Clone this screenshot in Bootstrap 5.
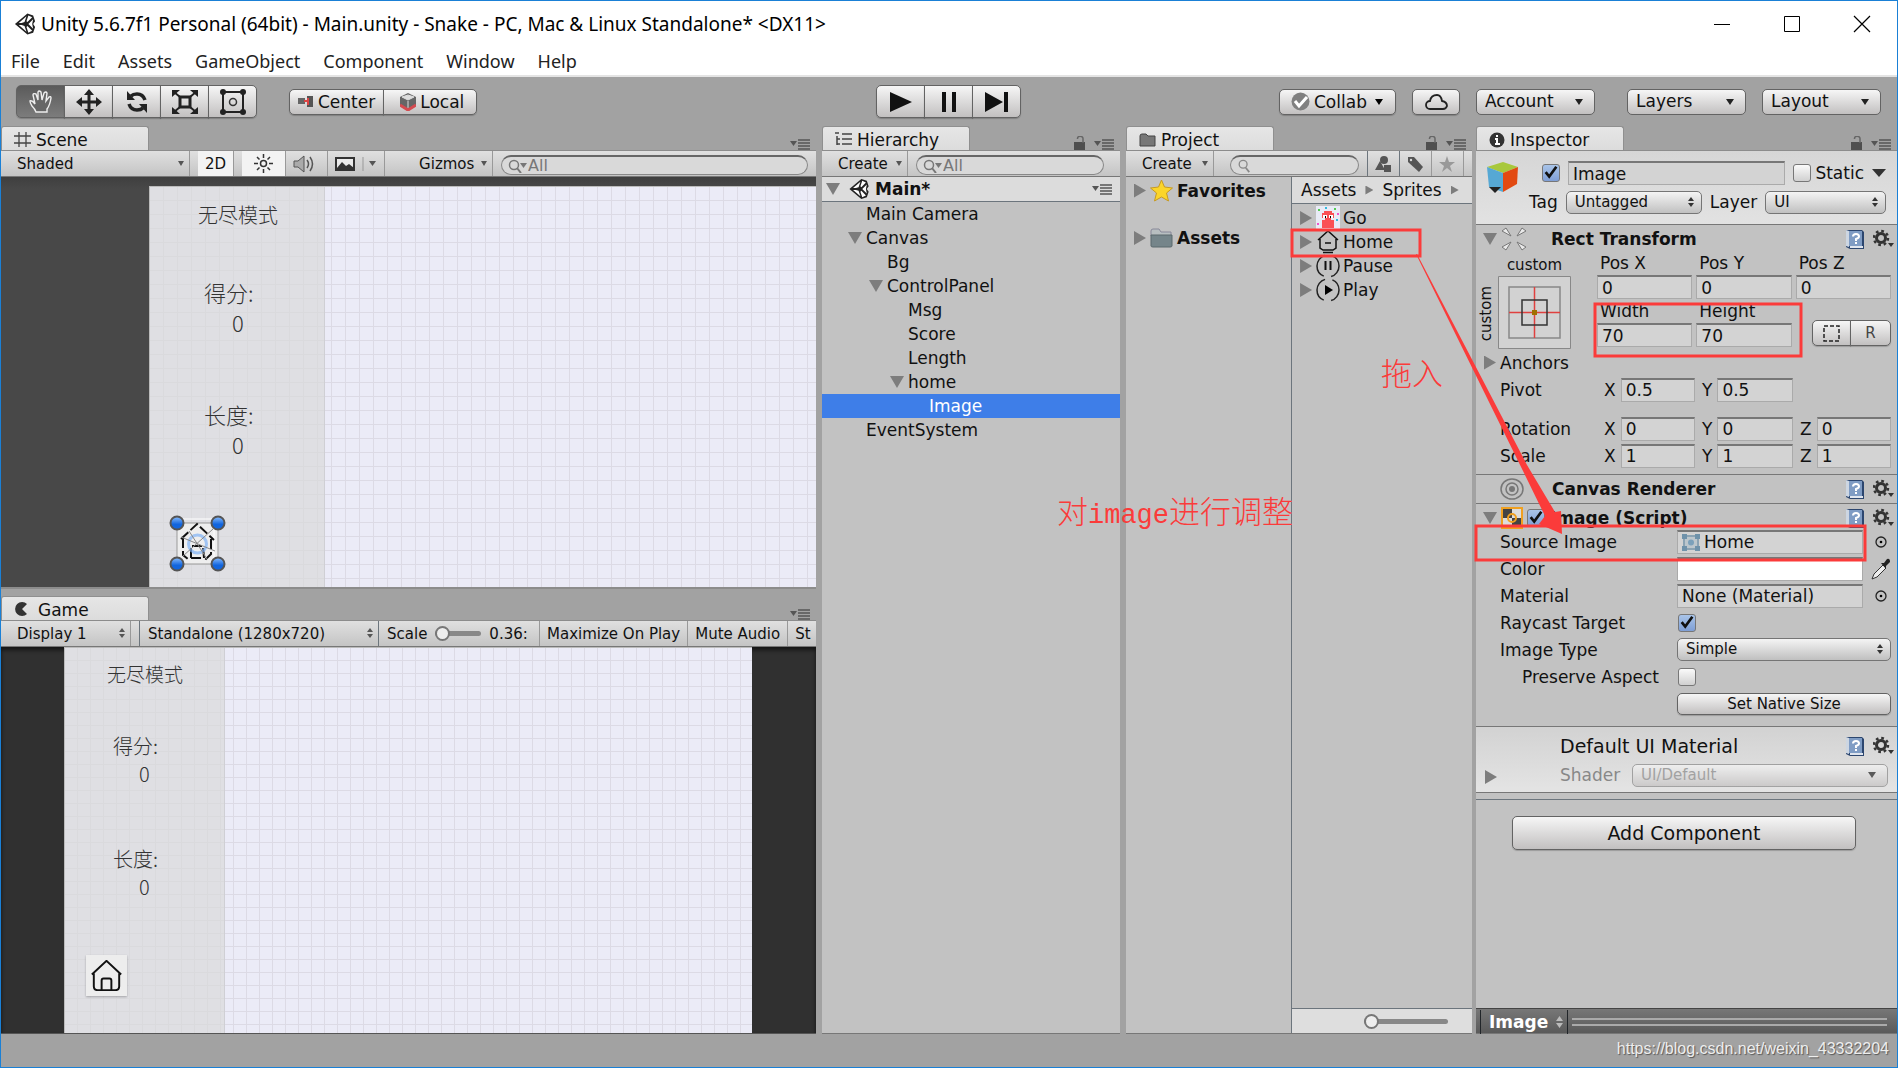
<!DOCTYPE html>
<html lang="zh-CN">
<head>
<meta charset="utf-8">
<meta name="viewport" content="width=device-width, initial-scale=1">
<title>Unity 5.6.7f1 Personal (64bit) - Main.unity - Snake</title>
<link href="https://cdn.jsdelivr.net/npm/bootstrap@5.3.0/dist/css/bootstrap.min.css" rel="stylesheet">
<style>
:root{--ed:"DejaVu Sans","Noto Sans CJK SC",sans-serif;--line:#8a8a8a}
body{background:#a2a2a2;color:#111;font:17px/24px var(--ed);border:1px solid #1a80d6;height:100vh;overflow:hidden}
svg{display:block;flex:none}
a{color:inherit;text-decoration:none}
button,select,input{font-family:inherit;color:inherit}
.sysfont{font-family:"Noto Sans","Open Sans",sans-serif}
.titlebar{height:46px;background:#fff;font-size:19px;padding-left:13px;color:#000}
.titlebar button{border:0;background:none;width:70px;height:46px;display:flex;align-items:center;justify-content:center;padding:0}
.menubar{height:30px;background:#fff;font-size:18px;padding-left:10px;gap:23px;color:#222;border-bottom:2px solid #e4e4e4}
.mainbar{height:49px;padding:8px 16px 8px 15px}
.ubtn{border:1px solid #636363;border-radius:5px;background:linear-gradient(#f6f6f6,#c2c0c0);height:26px;font-size:17px;line-height:22px;padding:0 8px;display:flex;align-items:center;box-shadow:0 1px 1px #0003}
.seg>.ubtn{border-radius:0;margin-left:-1px}
.seg>.ubtn:first-child{border-radius:5px 0 0 5px;margin-left:0}
.seg>.ubtn:last-child{border-radius:0 5px 5px 0}
.tools .ubtn{width:49px;height:33px;padding:0;justify-content:center}
.tools .ubtn.on{background:linear-gradient(#5b5b5b,#7c7c7c)}
.usel{appearance:none;border:1px solid #757575;border-radius:5px;height:23px;font-size:15px;line-height:18px;padding:0 18px 1px 8px;min-width:0;
 background:url("data:image/svg+xml,%3Csvg xmlns='http://www.w3.org/2000/svg' width='6' height='11'%3E%3Cpath d='M0 4L3 0 6 4zM0 6h6l-3 4z' fill='%23333'/%3E%3C/svg%3E") no-repeat right 7px center,linear-gradient(#f4f4f4,#c0c0c0)}
.usel.drop{background:url("data:image/svg+xml,%3Csvg xmlns='http://www.w3.org/2000/svg' width='8' height='6'%3E%3Cpath d='M0 0h8L4 6z' fill='%23222'/%3E%3C/svg%3E") no-repeat right 11px center,linear-gradient(#f6f6f6,#c2c0c0)}
.usel.tall{height:26px;font-size:17px;line-height:22px;border-color:#636363;width:119px}
.usel:disabled{color:#888;opacity:.7;border-color:#888}
.cols{gap:6px;min-height:0}
.c-view{flex:815 1 0;gap:7px}.c-hier{flex:298 1 0}.c-proj{flex:346 1 0}.c-insp{flex:421 1 0;margin-left:-2px}
.cols>div,.pane{min-width:0;min-height:0}
.tabrow{height:24px;flex:none;padding-right:6px;gap:8px}
.utab{background:linear-gradient(#e6e6e6,#dcdcdc);border:1px solid #8f8f8f;border-bottom:0;border-radius:3px 3px 0 0;width:148px;height:24px;padding:2px 0 0 12px;gap:5px;line-height:22px}
.strip{height:27px;flex:none;background:linear-gradient(#e0e0e0,#c4c4c4);border-top:1px solid #8c8c8c;border-bottom:1px solid #777;font-size:15px;overflow:hidden}
.cell{border:0;border-right:1px solid #999;background:none;height:25px;line-height:24px;padding:0 8px;white-space:nowrap;display:flex;align-items:center;flex:none;font-size:15px}
.strip button.cell{padding:0 7px}
.cell.lit{background:#f3f3f3}
select.cell{appearance:none;border-radius:0;display:block;background:url("data:image/svg+xml,%3Csvg xmlns='http://www.w3.org/2000/svg' width='6' height='5'%3E%3Cpath d='M0 0h6L3 5z' fill='%23555'/%3E%3C/svg%3E") no-repeat right 5px center}
select.cell.ud{background-image:url("data:image/svg+xml,%3Csvg xmlns='http://www.w3.org/2000/svg' width='6' height='11'%3E%3Cpath d='M0 4L3 0 6 4zM0 6h6l-3 4z' fill='%23555'/%3E%3C/svg%3E")}
.find{border:1px solid #888;border-top:2px solid #666;border-radius:11px;background:#d9d9d9;height:20px;padding:0 6px;color:#777;min-width:0}
.find input{border:0;background:none;outline:0;min-width:0;width:100%;padding:0;font-size:16px;line-height:16px;height:16px}
.find input::placeholder{color:#777;opacity:1}
.pbody{background:#c2c2c2;border-bottom:1px solid #777}
.trow{height:24px;white-space:nowrap}
.tri-d,.tri-r{flex:none;background:#7d7d7d;width:14px;height:12px;clip-path:polygon(0 0,100% 0,50% 100%)}
.tri-r{width:12px;height:14px;clip-path:polygon(0 0,100% 50%,0 100%)}
.l1{padding-left:26px}.l2{padding-left:47px}.l3{padding-left:68px}.l4{padding-left:89px}
.l1,.l2,.l3,.l4{gap:4px}
.nokids::before{content:"";width:14px;flex:none}
.picked{background:#3e7ee8;color:#fff}
.sceneview{background:linear-gradient(#3f3f3f,#484848 12px);border-bottom:2px solid #8c8c8c;padding:9px 0 0 148px;overflow:hidden}
.gameview{background:#303030;padding:0 64px 0 63px;box-shadow:inset 0 3px 4px #0009;border-bottom:1px solid #555;overflow:hidden}
.board{background-color:#ebebf7;color:#333;border:1px solid #bbb;border-width:1px 0 0 1px;
 background-image:repeating-linear-gradient(90deg,#0000 0 13px,#dcdae5 13px 14px),repeating-linear-gradient(#0000 0 13px,#dcdae5 13px 14px)}
.gameview .board{background-image:repeating-linear-gradient(90deg,#0000 0 12px,#dcdae5 12px 13px),repeating-linear-gradient(#0000 0 12px,#dcdae5 12px 13px)}
.side{background:#d9d9d9aa;font-family:"Noto Sans CJK SC",sans-serif;font-weight:300;width:175px;font-size:22px;line-height:30px;border-right:1px solid #cfcfd4;padding:14px 0 0 54px}
.side .mode{font-size:20px;line-height:28px;margin:0 0 48px -6px}
.side .num{padding-left:28px;margin-bottom:62px}
.side.sm{width:160px;font-size:20px;line-height:28px;padding:12px 0 0 48px}
.side.sm .mode{font-size:19px;margin-bottom:44px}
.side.sm .num{margin-bottom:57px;padding-left:26px}
.side .hm{margin:-68px 0 0 -35px}
.side .num+.hm{margin-top:-6px}
.side.sm .num+.hm{margin:-3px 0 0 -27px;background:#ededed;box-shadow:0 1px 2px #0004}
.ins{background:#c2c2c2;border-bottom:1px solid #777}
.ihead{background:linear-gradient(#d6d6d6,#e2e2e2);border-top:1px solid #8c8c8c;padding:10px 11px 9px 10px;height:74px}
.chk{appearance:none;width:18px;height:18px;border:1px solid #777;border-radius:3px;background:linear-gradient(#fafafa,#d0d0d0);margin:0;flex:none}
.chk:checked{background:url("data:image/svg+xml,%3Csvg xmlns='http://www.w3.org/2000/svg' width='18' height='18'%3E%3Cpath d='M3 8l4 5L15 2' fill='none' stroke='%23111' stroke-width='3'/%3E%3C/svg%3E") center/16px no-repeat,linear-gradient(#a9c4e8,#7f9fd6)}
.fld{border:1px solid #aaa;border-top:2px solid #777;background:#d3d3d3;height:24px;font-size:17px;line-height:20px;padding:0 4px;min-width:0;width:100%;border-radius:0;outline:0}
.sechead{border-top:1px solid #777;font-weight:700;height:29px;padding:0 3px 0 7px;gap:4px}
.sechead .book{margin:0 4px 0 auto}
.rt{padding:0 6px 0 5px;height:96px;gap:26px}
.rtgrid{display:grid;grid-template-columns:1fr 1fr 1fr;column-gap:4px;grid-auto-rows:24px;margin-top:-2px}
.rtgrid label{padding-left:3px}
.vrow{display:grid;grid-template-columns:97px 1fr 1fr 1fr;column-gap:4px;padding:0 6px 0 24px;height:27px;align-items:center}
.vrow label{display:flex;align-items:center;padding-left:3px;gap:5px}
.prow{display:grid;grid-template-columns:177px 1fr;padding:0 6px 0 24px;height:27px;align-items:center}
.prow .chk{margin-left:1px}
.vert{writing-mode:vertical-rl;transform:rotate(180deg);font-size:15px;line-height:15px}
.matbox{background:linear-gradient(#d2d2d2,#e4e4e4);border-top:1px solid #777;border-bottom:1px solid #777;height:67px;padding:5px 9px 0 9px}
.preview{height:25px;background:linear-gradient(#777,#5a5a5a);color:#fff;font-weight:700;border-top:1px solid #444;padding-top:2px}
.bars{height:8px;border:solid #aaa;border-width:2px 0;margin:0 10px 0 4px}
.statusbar{height:33px;color:#eee;font:16px/30px "Liberation Sans",sans-serif;text-shadow:1px 1px 1px #555;padding-right:8px}
.rng{appearance:none;background:none;width:78px;height:16px;margin:0}
.rng::-webkit-slider-runnable-track{height:5px;background:#888;border-radius:3px}
.rng::-webkit-slider-thumb{appearance:none;width:15px;height:15px;border-radius:50%;border:2px solid #777;background:#eee;margin-top:-5px}
.over{position:absolute;left:0;top:0;pointer-events:none}
.redtext{position:absolute;color:#fb3b3a;font:300 31px/40px "Noto Sans CJK SC",sans-serif;white-space:nowrap}
.redtext span{font-family:"Liberation Mono",monospace;font-size:27px}
</style>
<script src="https://cdn.jsdelivr.net/npm/bootstrap@5.3.0/dist/js/bootstrap.bundle.min.js"></script>
</head>
<body class="d-flex flex-column position-relative">
<svg width="0" height="0" class="position-absolute" aria-hidden="true">
 <symbol id="unity" viewBox="0 0 24 24"><path d="M1 12L14 1l6 2 2 6-2 3 2 3-2 6-6 2z" fill="#222"/><path d="M5 11l8-7-2 6-3 1zM5 13l8 7-2-6-3-1zM15 3l4 2-5 5-1-1zM15 21l4-2-5-5-1 1zM20 7l-5 5 5 5-1-5zM12 12" fill="#fff"/></symbol>
 <symbol id="menu" viewBox="0 0 20 12"><path d="M0 3h7L3.500 8z" fill="#555"/><path d="M8 2h12M8 5h12M8 8h12M8 11h12" stroke="#555" stroke-width="1.500"/></symbol>
 <symbol id="lock" viewBox="0 0 12 14"><path d="M0 6h11v8H0z" fill="#4f4f4f"/><path d="M3.500 3V2.500a2.500 2 0 0 1 5.500 0V7" fill="none" stroke="#666" stroke-width="1.500"/></symbol>
 <symbol id="mag" viewBox="0 0 14 16"><circle cx="6" cy="6" r="4.500" fill="none" stroke="#888" stroke-width="1.500"/><path d="M9 10l4 5" stroke="#888" stroke-width="2"/></symbol>
 <symbol id="book" viewBox="0 0 20 21"><path d="M1 1h16l2 2v17H5l-4-2z" fill="#2c466f"/><path d="M4 2h13v15H4z" fill="#7f9cc4"/><path d="M1 1l3 1v16l-3-1z" fill="#cdd6e2"/><path d="M5 19h13v-2H5z" fill="#dfe5ee"/><path d="M8 7.500q0-2.500 3-2.500t3 2.500q0 1.500-3 2.500v2m0 1v2" stroke="#fff" stroke-width="2" fill="none"/></symbol>
 <symbol id="gear" viewBox="0 0 21 20"><circle cx="8" cy="9" r="4.500" fill="none" stroke="#333" stroke-width="3"/><circle cx="8" cy="9" r="7" fill="none" stroke="#333" stroke-width="2.500" stroke-dasharray="2.700 2.800"/><path d="M15 14h6l-3 4z" fill="#333"/></symbol>
 <symbol id="house" viewBox="0 0 32 32"><path d="M1 15L16 1l15 14M3 14v13q0 4 4 4h18q4 0 4-4V14M11 31V21q0-2 2-2h6q2 0 2 2v10" fill="none" stroke="#111" stroke-width="2"/></symbol>
 <symbol id="pick" viewBox="0 0 12 12"><circle cx="6" cy="6" r="5" fill="none" stroke="#222" stroke-width="1.300"/><circle cx="6" cy="6" r="1.300"/></symbol>
</svg>

<header class="titlebar sysfont d-flex align-items-center flex-shrink-0">
 <svg width="23" height="24"><use href="#unity"/></svg>
 <span class="ms-1 flex-grow-1 text-nowrap">Unity 5.6.7f1 Personal (64bit) - Main.unity - Snake - PC, Mac &amp; Linux Standalone* &lt;DX11&gt;</span>
 <button aria-label="Minimize"><svg width="16" height="16"><path d="M0 8.500h16" stroke="#000"/></svg></button>
 <button aria-label="Maximize"><svg width="17" height="17"><path d="M.5.5h15v15H.5z" fill="none" stroke="#000"/></svg></button>
 <button aria-label="Close"><svg width="18" height="18"><path d="M1 1l16 16M17 1L1 17" stroke="#000" stroke-width="1.200"/></svg></button>
</header>
<nav class="menubar sysfont d-flex align-items-center flex-shrink-0"><a href="#">File</a><a href="#">Edit</a><a href="#">Assets</a><a href="#">GameObject</a><a href="#">Component</a><a href="#">Window</a><a href="#">Help</a></nav>

<div class="mainbar d-flex justify-content-between flex-shrink-0">
 <div class="d-flex align-items-center" style="flex:1 1 0">
  <div class="seg tools d-flex">
   <button class="ubtn on" aria-label="Hand"><svg width="28" height="28" viewBox="0 0 28 28"><path d="M9 24q-1-3-4-6-2-3-2-5 2-1 5 3L6 7q0-2 3-1l2 6V4q1-2 3 0l1 8 2-7q2-2 3 0l-1 8 3-4q2-1 2 1-1 7-4 11v3z" fill="#666" stroke="#eee" stroke-width="1.400"/></svg></button>
   <button class="ubtn" aria-label="Move"><svg width="26" height="26" viewBox="0 0 26 26"><path d="M13 0l5 6h-3.500v5.500H20V8l6 5-6 5v-3.500h-5.500V20H18l-5 6-5-6h3.500v-5.500H6V18l-6-5 6-5v3.500h5.500V6H8z" fill="#222"/></svg></button>
   <button class="ubtn" aria-label="Rotate"><svg width="24" height="22" viewBox="0 0 24 22"><path d="M6 5q2-2 6-2 6 0 8 6M18 17q-2 2-6 2-6 0-8-6" fill="none" stroke="#222" stroke-width="3.500"/><path d="M2 0v9h8zM22 22v-9h-8z" fill="#222"/></svg></button>
   <button class="ubtn" aria-label="Scale"><svg width="26" height="24" viewBox="0 0 26 24"><path d="M8 7h10v10H8z" fill="none" stroke="#222" stroke-width="3"/><path d="M2 2l6 5M24 2l-6 5M2 22l6-5M24 22l-6-5" stroke="#222" stroke-width="2"/><path d="M0 0h8L0 7zM26 0h-8l8 7zM0 24h8l-8-7zM26 24h-8l8-7z" fill="#222"/></svg></button>
   <button class="ubtn" aria-label="Rect"><svg width="26" height="26" viewBox="0 0 26 26"><path d="M3 3h20v20H3z" fill="none" stroke="#222" stroke-width="2"/><g fill="#222"><circle cx="3" cy="3" r="3"/><circle cx="23" cy="3" r="3"/><circle cx="3" cy="23" r="3"/><circle cx="23" cy="23" r="3"/></g><circle cx="13" cy="13" r="3.500" fill="none" stroke="#333" stroke-width="1.500"/></svg></button>
  </div>
  <div class="seg d-flex ms-4 ps-1 text-nowrap">
   <button class="ubtn ms-1"><svg class="me-1" width="16" height="12" viewBox="0 0 16 12"><path d="M0 2h7v6H0z" fill="#666"/><path d="M9 0h6v11H9z" fill="#555"/><path d="M6 5h5M10 2v7" stroke="#d44" stroke-width="2"/></svg>Center</button>
   <button class="ubtn ps-3 pe-2"><svg class="me-1" width="16" height="18" viewBox="0 0 16 18"><path d="M8 0l8 4v9l-8 5-8-5V4z" fill="#666"/><path d="M2 4l6-2 6 2-6 3zM8 8v9" fill="#ddd" stroke="#ddd"/><path d="M0 12l8 5 8-5" stroke="#d54b50" stroke-width="3" fill="none"/></svg><span class="me-1">Local</span></button>
  </div>
 </div>
 <div class="seg tools d-flex">
  <button class="ubtn" aria-label="Play"><svg width="22" height="22"><path d="M0 1l22 10L0 21z" fill="#111"/></svg></button>
  <button class="ubtn" aria-label="Pause"><svg width="16" height="20"><path d="M1 0h4v20H1zM11 0h4v20h-4z" fill="#111"/></svg></button>
  <button class="ubtn" aria-label="Step"><svg width="24" height="20"><path d="M0 0l18 10L0 20zM19 0h4v20h-4z" fill="#111"/></svg></button>
 </div>
 <div class="d-flex align-items-center justify-content-end gap-3" style="flex:1 1 0">
  <button class="ubtn" style="width:117px;padding-left:11px"><svg class="me-1" width="19" height="19"><circle cx="9.500" cy="9.500" r="9" fill="#808080"/><path d="M4 9l4 5 8-9" fill="none" stroke="#fff" stroke-width="3"/></svg>Collab<svg class="ms-2" width="8" height="6"><path d="M0 0h8L4 6z"/></svg></button>
  <button class="ubtn px-2" style="width:48px" aria-label="Cloud"><svg class="mx-auto" width="23" height="18" viewBox="0 0 23 18"><path d="M5 16a4 4 0 0 1 0-8q1-6 7-6 4 0 5 6 5 1 5 5-1 3-4 3z" fill="none" stroke="#222" stroke-width="1.800"/></svg></button>
  <select class="usel drop tall" aria-label="Account"><option>Account</option></select>
  <select class="usel drop tall ms-3" aria-label="Layers"><option>Layers</option></select>
  <select class="usel drop tall" aria-label="Layout"><option>Layout</option></select>
 </div>
</div>

<main class="cols d-flex flex-grow-1">
 <div class="c-view d-flex flex-column">
  <section class="pane d-flex flex-column" style="flex:463 1 0">
   <div class="tabrow d-flex align-items-end"><div class="utab d-flex align-items-center"><svg width="17" height="15"><path d="M5 0v15M12 0v15M0 4h17M0 11h17" stroke="#444" stroke-width="1.300"/></svg>Scene</div><svg class="ms-auto" width="20" height="12"><use href="#menu"/></svg></div>
   <div class="strip d-flex">
    <select class="cell ms-2" style="width:181px" aria-label="Draw mode"><option>Shaded</option></select>
    <button class="cell lit ms-2">2D</button>
    <button class="cell lit ms-2" aria-label="Lighting"><svg class="mx-1" width="21" height="21" viewBox="0 0 21 21"><circle cx="10.500" cy="10.500" r="3" fill="none" stroke="#333" stroke-width="1.500"/><path d="M10.500 1v4M10.500 16v4M1 10.500h4M16 10.500h4M4 4l2.500 2.500M14.500 14.500L17 17M4 17l2.500-2.500M14.500 6.500L17 4" stroke="#333" stroke-width="1.500"/></svg></button>
    <button class="cell" aria-label="Audio"><svg class="me-1" width="23" height="18" viewBox="0 0 23 18"><path d="M1 6h4l6-5v16l-6-5H1z" fill="#aaa" stroke="#555"/><path d="M14 5q3 4 0 8M17 2q5 7 0 14" fill="none" stroke="#555" stroke-width="1.500"/></svg></button>
    <button class="cell" aria-label="Effects"><svg width="42" height="14" viewBox="0 0 42 14"><path d="M1 1h18v12H1z" fill="#fff8" stroke="#333" stroke-width="2"/><path d="M2 11l5-6 4 4 3-2 5 4v2H2z" fill="#333"/><path d="M28 0v14" stroke="#999"/><path d="M34 4h7l-3.500 5z" fill="#555"/></svg></button>
    <select class="cell" style="width:108px;padding-left:34px" aria-label="Gizmos"><option>Gizmos</option></select>
    <label class="find d-flex align-items-center flex-grow-1 mx-2 mt-1"><svg width="20" height="14" viewBox="0 0 20 14"><circle cx="6" cy="6" r="4.500" fill="none" stroke="#777" stroke-width="1.500"/><path d="M9 9l4 5" stroke="#777" stroke-width="2"/><path d="M12 4h7l-3.500 5z" fill="#777"/></svg><input placeholder="All" aria-label="Search scene"></label>
   </div>
   <div class="sceneview d-flex flex-grow-1">
    <div class="board flex-grow-1 d-flex"><div class="side text-nowrap"><div class="mode">无尽模式</div><div>得分:</div><div class="num">0</div><div>长度:</div><div class="num">0</div>
     <svg class="hm" width="58" height="58" viewBox="0 0 58 58"><defs><linearGradient id="bl" x2="0" y2="1"><stop offset="0" stop-color="#8dc0ff"/><stop offset=".6" stop-color="#1265dd"/></linearGradient></defs><path d="M8 8h41v41H8z" fill="#eee" stroke="#999"/><path d="M4 4h41v41" stroke="#fff" fill="none"/><path d="M12 24L28 9l17 16M14 23v17l6 5M42 24v15l-6 6M22 43V31h12l1 12z" fill="none" stroke="#111" stroke-width="2" stroke-dasharray="10 3"/><circle cx="28.500" cy="29" r="9" fill="none" stroke="#7fb2f5" stroke-width="3" opacity=".7"/><path d="M14 41l30-27M20 16l18 28M12 22l34 14" stroke="#888"/><g fill="url(#bl)" stroke="#555" stroke-width="2"><circle cx="8" cy="8" r="6.500"/><circle cx="49" cy="8" r="6.500"/><circle cx="8" cy="49" r="6.500"/><circle cx="49" cy="49" r="6.500"/></g></svg></div></div>
   </div>
  </section>
  <section class="pane d-flex flex-column" style="flex:438 1 0">
   <div class="tabrow d-flex align-items-end"><div class="utab d-flex align-items-center"><svg width="15" height="15" class="me-1"><path d="M13 2A7 7 0 1 0 13 12L8 7z" fill="#333"/></svg>Game</div><svg class="ms-auto" width="20" height="12"><use href="#menu"/></svg></div>
   <div class="strip d-flex">
    <select class="cell ud ms-2" style="width:122px" aria-label="Display"><option>Display 1</option></select>
    <select class="cell ud ms-2 border-start border-secondary" style="width:240px" aria-label="Aspect"><option>Standalone (1280x720)</option></select>
    <label class="cell" style="width:161px">Scale<input class="rng mx-2" type="range" value="0" style="width:46px">0.36:</label>
    <button class="cell">Maximize On Play</button><button class="cell">Mute Audio</button><button class="cell border-0">St</button>
   </div>
   <div class="gameview d-flex flex-grow-1"><div class="board flex-grow-1 d-flex"><div class="side sm text-nowrap"><div class="mode">无尽模式</div><div>得分:</div><div class="num">0</div><div>长度:</div><div class="num">0</div><svg class="hm" width="41" height="41" viewBox="-5 -5 42 42"><use href="#house" width="32" height="32"/></svg></div></div></div>
  </section>
 </div>

 <div class="c-hier d-flex flex-column">
  <div class="tabrow d-flex align-items-end"><div class="utab d-flex align-items-center"><svg width="17" height="15"><path d="M0 1h4M7 2h10M7 7h10M7 12h10M2 4v9M2 7h3M2 12h3" stroke="#444" stroke-width="1.500"/></svg>Hierarchy</div><svg class="ms-auto" width="12" height="14"><use href="#lock"/></svg><svg width="20" height="12"><use href="#menu"/></svg></div>
  <div class="strip d-flex"><select class="cell ms-2" style="width:78px" aria-label="Create"><option>Create</option></select>
   <label class="find d-flex align-items-center flex-grow-1 mt-1 ms-2 me-3"><svg width="20" height="14" viewBox="0 0 20 14"><circle cx="6" cy="6" r="4.500" fill="none" stroke="#777" stroke-width="1.500"/><path d="M9 9l4 5" stroke="#777" stroke-width="2"/><path d="M12 4h7l-3.500 5z" fill="#777"/></svg><input placeholder="All" aria-label="Search hierarchy"></label></div>
  <div class="pbody flex-grow-1">
   <div class="d-flex align-items-center fw-bold ps-1 pe-2 gap-1 border-bottom border-secondary" style="height:25px;background:#dcdcdc"><i class="tri-d"></i><svg width="23" height="22" class="ms-1"><use href="#unity"/></svg>Main*<svg class="ms-auto" width="20" height="12"><use href="#menu"/></svg></div>
   <div class="trow l1 nokids d-flex align-items-center">Main Camera</div>
   <div class="trow l1 d-flex align-items-center"><i class="tri-d"></i>Canvas</div>
   <div class="trow l2 nokids d-flex align-items-center">Bg</div>
   <div class="trow l2 d-flex align-items-center"><i class="tri-d"></i>ControlPanel</div>
   <div class="trow l3 nokids d-flex align-items-center">Msg</div>
   <div class="trow l3 nokids d-flex align-items-center">Score</div>
   <div class="trow l3 nokids d-flex align-items-center">Length</div>
   <div class="trow l3 d-flex align-items-center"><i class="tri-d"></i>home</div>
   <div class="trow l4 nokids d-flex align-items-center picked">Image</div>
   <div class="trow l1 nokids d-flex align-items-center">EventSystem</div>
  </div>
 </div>

 <div class="c-proj d-flex flex-column">
  <div class="tabrow d-flex align-items-end"><div class="utab d-flex align-items-center"><svg width="17" height="14"><path d="M1 3q0-2 2-2h4l2 2h7v10H1z" fill="#777" stroke="#444"/></svg>Project</div><svg class="ms-auto" width="12" height="14"><use href="#lock"/></svg><svg width="20" height="12"><use href="#menu"/></svg></div>
  <div class="strip d-flex"><select class="cell ms-2" style="width:80px" aria-label="Create asset"><option>Create</option></select>
   <label class="find d-flex align-items-center flex-grow-1 mt-1 ms-3 me-2"><svg width="14" height="14"><use href="#mag"/></svg><input aria-label="Search project"></label>
   <button class="cell border-start border-secondary" aria-label="Type"><svg width="17" height="16"><circle cx="9" cy="4" r="4" fill="#555"/><path d="M0 14l5-9 5 9zM9 9h7v7H9z" fill="#555"/></svg></button>
   <button class="cell" aria-label="Label"><svg width="17" height="16"><path d="M1 1h6l9 10-4 5L1 6z" fill="#555"/><circle cx="4" cy="4" r="1.200" fill="#ddd"/></svg></button>
   <button class="cell" aria-label="Favorite"><svg width="17" height="16"><path d="M8 0l2 6h6l-5 4 2 6-5-4-5 4 2-6-5-4h6z" fill="#999"/></svg></button><span class="ps-2"></span></div>
  <div class="pbody flex-grow-1 d-flex">
   <div class="border-end border-secondary fw-bold ps-2 flex-shrink-0" style="width:48%">
    <div class="trow d-flex align-items-center gap-1" style="height:27px"><i class="tri-r"></i><svg width="23" height="23"><path d="M11.500 1l3 7 8 1-6 5 2 8-7-4-7 4 2-8-6-5 8-1z" fill="#fbd52a" stroke="#c79a22"/></svg>Favorites</div>
    <div class="trow d-flex align-items-center gap-1 mt-3 pt-1" style="height:32px"><i class="tri-r"></i><svg width="23" height="20"><path d="M1 3q0-2 2-2h6l2 3h10v4H1z" fill="#b7bec0" stroke="#889"/><path d="M1 7h21v11q0 1-2 1H3q-2 0-2-1z" fill="#75858a" stroke="#5b686c"/></svg>Assets</div>
   </div>
   <div class="d-flex flex-column flex-grow-1" style="min-width:0">
    <div class="d-flex align-items-center text-nowrap border-bottom border-secondary overflow-hidden" style="height:27px;background:#dcdcdc;gap:9px;padding-left:9px"><a href="#">Assets</a><i class="tri-r" style="width:8px;height:9px"></i><a href="#">Sprites</a><i class="tri-r" style="width:8px;height:9px"></i></div>
    <div class="ps-2 flex-grow-1" style="padding-top:2px">
     <div class="trow d-flex align-items-center"><i class="tri-r me-1"></i><svg width="24" height="24"><path d="M0 0h24v24H0z" fill="#e9ebf6"/><path d="M6 22v-8h3v-2h6v2h3v8zM8 5h8v2h2v5H6V7h2z" fill="#fa5155"/><path d="M7 9h4v3H7zM13 9h4v3h-4z" fill="#fff"/><path d="M9 10h1v2H9zM14 10h1v2h-1z"/><path d="M2 3h2v2H2zM18 2h2v2h-2z" fill="#5c5"/><path d="M9 1h2v2H9zM20 13h2v2h-2z" fill="#3bd"/><path d="M1 17h2v2H1zM21 7h2v2h-2z" fill="#e5c"/></svg><span style="padding-left:3px">Go</span></div>
     <div class="trow d-flex align-items-center"><i class="tri-r me-1"></i><svg width="24" height="24"><path d="M2 10L12 1l10 9M4 9v9l3 2h10l3-2V9M9 13h6M7 22.500h10" fill="none" stroke="#111" stroke-width="1.500"/></svg><span style="padding-left:3px">Home</span></div>
     <div class="trow d-flex align-items-center"><i class="tri-r me-1"></i><svg width="24" height="24"><circle cx="12" cy="12" r="11" fill="none" stroke="#222" stroke-width="1.500" stroke-dasharray="27 7.500" stroke-dashoffset="13"/><path d="M9.500 7v9M14.500 7v9" stroke="#111" stroke-width="2"/></svg><span style="padding-left:3px">Pause</span></div>
     <div class="trow d-flex align-items-center"><i class="tri-r me-1"></i><svg width="24" height="24"><circle cx="12" cy="12" r="11" fill="none" stroke="#222" stroke-width="1.500" stroke-dasharray="27 7.500" stroke-dashoffset="13"/><path d="M9 7l8 5-8 5z"/></svg><span style="padding-left:3px">Play</span></div>
    </div>
    <div class="d-flex align-items-center justify-content-end border-top border-secondary pe-4" style="height:25px;background:#dedede"><input class="rng" style="width:84px" type="range" value="0" aria-label="Icon size"></div>
   </div>
  </div>
 </div>

 <div class="c-insp d-flex flex-column">
  <div class="tabrow d-flex align-items-end"><div class="utab d-flex align-items-center"><svg width="16" height="16"><circle cx="8" cy="8" r="7.500" fill="#333"/><path d="M8 3v2M6 7h2v5M6 12h5" stroke="#fff" stroke-width="2" fill="none"/></svg>Inspector</div><svg class="ms-auto" width="12" height="14"><use href="#lock"/></svg><svg width="20" height="12"><use href="#menu"/></svg></div>
  <div class="ins flex-grow-1 d-flex flex-column">
   <div class="ihead d-flex">
    <svg width="33" height="34" viewBox="0 0 33 34"><path d="M1 6l16-5 15 5-15 6z" fill="#a8c83c"/><path d="M1 6l16 6v19L3 26z" fill="#56a8d4"/><path d="M32 6l-15 6v19l14-8z" fill="#e24a12"/><path d="M3 26h12l-6 6z" fill="#222"/></svg>
    <div class="flex-grow-1 d-flex flex-column gap-1" style="min-width:0">
     <div class="d-flex align-items-center gap-2" style="padding-left:23px;height:24px"><input class="chk" type="checkbox" checked aria-label="Active"><input class="fld" value="Image" aria-label="Name"><input id="st" class="chk" type="checkbox"><label for="st" style="margin-left:-4px">Static</label><i class="tri-d" style="background:#333;height:8px"></i></div>
     <div class="d-flex align-items-center gap-2" style="padding-left:10px;height:26px"><label for="tg">Tag</label><select id="tg" class="usel" style="flex:134 1 0"><option>Untagged</option></select><label for="ly">Layer</label><select id="ly" class="usel" style="flex:115 1 0"><option>UI</option></select></div>
    </div>
   </div>
   <div class="sechead d-flex align-items-center"><i class="tri-d"></i><svg width="26" height="24" viewBox="0 0 26 24"><g fill="#e9e9e9" stroke="#777"><path d="M1 4l4-3 5 8zM25 4l-4-3-5 8zM1 20l4 3 5-8zM25 20l-4 3-5-8z"/></g></svg><span class="ttl ms-3 ps-1">Rect Transform</span><svg class="book" width="20" height="21"><use href="#book"/></svg><svg width="21" height="20"><use href="#gear"/></svg></div>
   <div class="rt d-flex">
    <div class="d-flex align-items-end" style="margin-left:-2px"><span class="vert mb-2 me-1">custom</span><div class="text-center"><div style="font-size:15px;line-height:22px">custom</div><svg width="73" height="73"><path d="M.5.5h72v72H.5z" fill="#d2d2d2" stroke="#888"/><path d="M11 11h51v51H11z" fill="none" stroke="#888" stroke-width="1.500"/><path d="M36.500 11v51M11 36.500h51" stroke="#e0403f" stroke-width="1.500"/><path d="M24 24h25v25H24z" fill="none" stroke="#333" stroke-width="1.500"/><path d="M34 34h5v5h-5z" fill="#a07000"/></svg></div></div>
    <div class="rtgrid flex-grow-1">
     <label for="px">Pos X</label><label for="py">Pos Y</label><label for="pz">Pos Z</label>
     <input id="px" class="fld" value="0"><input id="py" class="fld" value="0"><input id="pz" class="fld" value="0">
     <label for="w">Width</label><label for="h">Height</label><span></span>
     <input id="w" class="fld" value="70"><input id="h" class="fld" value="70">
     <div class="seg d-flex ps-3" style="margin-top:-3px"><button class="ubtn px-1 flex-fill justify-content-center" aria-label="Blueprint"><svg width="17" height="17"><path d="M1 1h15v15H1z" fill="none" stroke="#222" stroke-width="1.500" stroke-dasharray="4 2"/></svg></button><button class="ubtn px-2 flex-fill justify-content-center" style="font-size:15px;color:#444">R</button></div>
    </div>
   </div>
   <div class="d-flex align-items-center gap-2 ps-2" style="height:27px"><i class="tri-r" style="margin-right:-4px"></i>Anchors</div>
   <div class="vrow"><span>Pivot</span><label>X<input class="fld" value="0.5"></label><label>Y<input class="fld" value="0.5"></label></div>
   <div class="vrow" style="margin-top:12px"><span>Rotation</span><label>X<input class="fld" value="0"></label><label>Y<input class="fld" value="0"></label><label>Z<input class="fld" value="0"></label></div>
   <div class="vrow" style="margin-bottom:5px"><span>Scale</span><label>X<input class="fld" value="1"></label><label>Y<input class="fld" value="1"></label><label>Z<input class="fld" value="1"></label></div>
   <div class="sechead d-flex align-items-center"><svg style="margin-left:17px" width="24" height="22" viewBox="0 0 24 22"><g fill="none" stroke="#777" stroke-width="1.500"><ellipse cx="12" cy="11" rx="11" ry="10"/><circle cx="12" cy="11" r="6"/></g><circle cx="12" cy="11" r="3" fill="#777"/></svg><span class="ttl ms-4">Canvas Renderer</span><svg class="book" width="20" height="21"><use href="#book"/></svg><svg width="21" height="20"><use href="#gear"/></svg></div>
   <div class="sechead d-flex align-items-center"><i class="tri-d"></i><svg width="22" height="22"><path d="M1 1h20v20H1z" fill="#ddd" stroke="#f0a020" stroke-width="2"/><path d="M2 2h9v9H2zM11 11h9v9h-9z" fill="#444"/><circle cx="11" cy="11" r="4" fill="none" stroke="#f0a020" stroke-width="2"/></svg><input class="chk" type="checkbox" checked aria-label="Enabled"><span class="ttl" style="margin-left:1px">Image (Script)</span><svg class="book" width="20" height="21"><use href="#book"/></svg><svg width="21" height="20"><use href="#gear"/></svg></div>
   <div class="prow" style="margin-top:-4px"><label for="si">Source Image</label><div class="d-flex align-items-center gap-2"><div class="fld d-flex align-items-center"><svg width="18" height="17"><path d="M2 2h14v13H2z" fill="#bcc6cc" stroke="#8ba3b3" stroke-width="2"/><g fill="#6f92aa"><path d="M0 0h5v5H0zM13 0h5v5h-5zM0 12h5v5H0zM13 12h5v5h-5z"/></g><circle cx="9" cy="8.500" r="3" fill="#7ba0ba"/></svg><input id="si" class="border-0 bg-transparent p-0 ps-1 w-100" value="Home" style="height:18px"></div><svg class="mx-1" width="12" height="12"><use href="#pick"/></svg></div></div>
   <div class="prow"><label for="cl">Color</label><div class="d-flex align-items-center gap-2"><button id="cl" class="fld bg-white" aria-label="Color"></button><svg width="20" height="22" viewBox="0 0 20 22"><path d="M1 21l2-5 9-9 3 3-9 9z" fill="#eee" stroke="#333"/><path d="M10 5l3 0 3-4q3-1 3 3l-4 4v3z" fill="#222"/></svg></div></div>
   <div class="prow"><label for="mt">Material</label><div class="d-flex align-items-center gap-2"><input id="mt" class="fld" value="None (Material)"><svg class="mx-1" width="12" height="12"><use href="#pick"/></svg></div></div>
   <div class="prow"><label for="rc">Raycast Target</label><input id="rc" class="chk" type="checkbox" checked></div>
   <div class="prow"><label for="it">Image Type</label><select id="it" class="usel"><option>Simple</option></select></div>
   <div class="prow"><label for="pa" style="padding-left:22px">Preserve Aspect</label><input id="pa" class="chk" type="checkbox"></div>
   <div class="prow"><span></span><button class="ubtn justify-content-center" style="height:22px;font-size:15px">Set Native Size</button></div>
   <div class="matbox" style="margin-top:9px">
    <div class="d-flex align-items-center" style="font-size:19px;height:28px;gap:8px;padding-left:75px;margin-right:-6px">Default UI Material<svg class="ms-auto" width="20" height="21"><use href="#book"/></svg><svg width="21" height="20"><use href="#gear"/></svg></div>
    <div class="d-flex align-items-center" style="height:30px;color:#888"><i class="tri-r mt-1"></i><label for="sh" style="margin-left:63px;width:72px">Shader</label><select id="sh" class="usel drop flex-grow-1" disabled><option>UI/Default</option></select></div>
   </div>
   <div class="border-bottom border-secondary" style="height:7px"></div>
   <div class="pt-3" style="padding:0 41px 0 36px"><button class="ubtn justify-content-center w-100" style="height:34px;font-size:19px">Add Component</button></div>
   <div class="preview mt-auto d-flex align-items-center ps-1"><span class="border-start border-end border-dark ps-2 pe-1 d-flex align-items-center gap-2">Image<svg width="7" height="12"><path d="M0 5l3.500-5L7 5zM0 7h7l-3.500 5z" fill="#bbb"/></svg></span><div class="bars flex-grow-1"></div></div>
  </div>
 </div>
</main>
<footer class="statusbar text-end flex-shrink-0">https://blog.csdn.net/weixin_43332204</footer>

<svg class="over" width="1896" height="1066" aria-hidden="true"><g fill="none" stroke="#fb3b3a" stroke-width="3"><path d="M1291 229h128v26h-128zM1594 303h206v52h-206zM1475 525h389v34h-389z"/></g><path d="M1415 253l108 219 21 43 -6 8 23 10-1-23-6 1-28-47-110-211z" fill="#fb3b3a"/></svg>
<div class="redtext" style="left:1380px;top:351px">拖入</div>
<div class="redtext" style="left:1056px;top:489px">对<span>image</span>进行调整</div>
</body>
</html>
